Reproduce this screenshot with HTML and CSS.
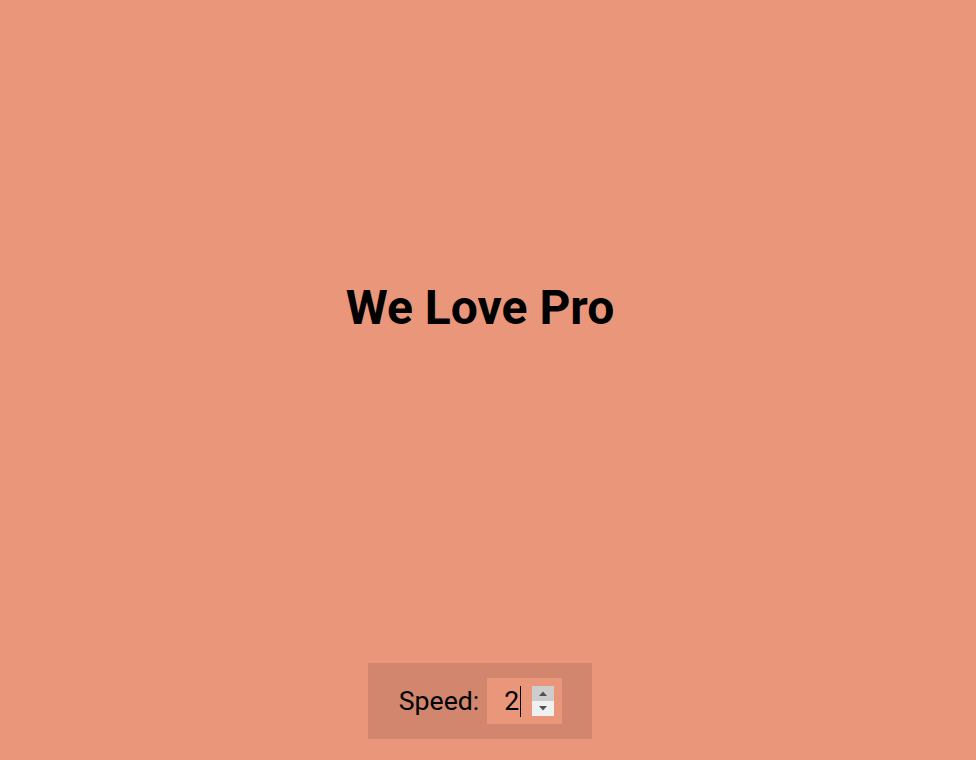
FILE: index.html
```html
<!DOCTYPE html>
<html lang="en">
<head>
<meta charset="utf-8">
<title>We Love Pro</title>
<link rel="stylesheet" href="styles.css">
</head>
<body>
<main class="page">
  <h1 class="title">We Love Pro</h1>
  <div class="controls">
    <label class="label" for="speed">Speed:</label>
    <div class="number" id="speed">
      <span class="value">2</span><span class="caret"></span>
      <span class="spinner">
        <span class="spin spin-up"><svg width="8" height="5" viewBox="0 0 8 5"><path d="M0 5 L4 0.5 L8 5 Z" fill="#505050"/></svg></span>
        <span class="spin spin-down"><svg width="8" height="5" viewBox="0 0 8 5"><path d="M0 0 L8 0 L4 4.5 Z" fill="#505050"/></svg></span>
      </span>
    </div>
  </div>
</main>
</body>
</html>
```
FILE: styles.css
```css
html, body {
  margin: 0;
  padding: 0;
}
body {
  background: #e9967a;
  font-family: Roboto, "Liberation Sans", sans-serif;
  color: #000;
}
.page {
  width: 960px;
  height: 760px;
  display: flex;
  flex-direction: column;
  align-items: center;
}
.title {
  margin: 284px 0 0;
  font-size: 48px;
  line-height: 48px;
  font-weight: 700;
}
.controls {
  margin-top: auto;
  margin-bottom: 21px;
  background: rgba(0, 0, 0, 0.1);
  padding: 15px 30px 15px 31px;
  display: flex;
  align-items: center;
  gap: 8px;
}
.label {
  font-size: 26.67px;
  line-height: 30px;
}
.number {
  width: 75px;
  height: 46px;
  box-sizing: border-box;
  background: #e9967a;
  display: flex;
  align-items: center;
  justify-content: flex-end;
  padding-right: 8px;
  font-size: 26.67px;
}
.value {
  line-height: 30px;
}
.caret {
  width: 1px;
  height: 31px;
  background: #000;
  margin-left: 1px;
  margin-right: 11px;
}
.spinner {
  width: 22px;
  height: 30px;
  display: flex;
  flex-direction: column;
}
.spin {
  flex: 1;
  display: flex;
  align-items: center;
  justify-content: center;
}
.spin-up {
  background: #cdcdcd;
}
.spin-down {
  background: #f0f0f0;
}
.spin svg {
  display: block;
}
```
